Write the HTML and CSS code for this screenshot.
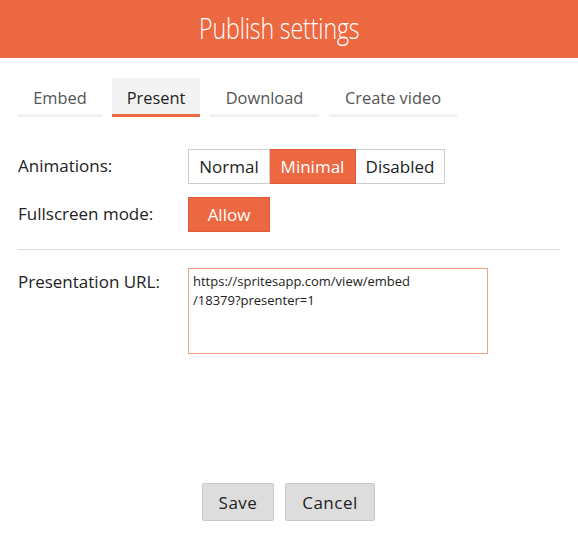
FILE: index.html
```html
<!DOCTYPE html>
<html>
<head>
<meta charset="utf-8">
<link rel="stylesheet" href="styles.css">
</head>
<body>
<div class="dialog">
  <header class="header"><h1 class="title">Publish settings</h1></header>
  <nav class="tabs">
    <div class="tab">Embed</div>
    <div class="tab active">Present</div>
    <div class="tab">Download</div>
    <div class="tab">Create video</div>
  </nav>
  <section class="options">
    <div class="row">
      <div class="label">Animations:</div>
      <div class="seg">
        <div class="seg-btn">Normal</div>
        <div class="seg-btn on">Minimal</div>
        <div class="seg-btn">Disabled</div>
      </div>
    </div>
    <div class="row">
      <div class="label">Fullscreen mode:</div>
      <div class="seg"><div class="seg-btn on allow">Allow</div></div>
    </div>
  </section>
  <hr class="divider">
  <section class="url-row">
    <div class="label">Presentation URL:</div>
    <div class="url-box">https://spritesapp.com/view/embed<br>/18379?presenter=1</div>
  </section>
  <footer class="footer">
    <button class="btn">Save</button>
    <button class="btn">Cancel</button>
  </footer>
</div>
</body>
</html>
```
FILE: styles.css
```css
* { box-sizing: border-box; }
html, body { margin: 0; padding: 0; background: #fff; }
body { font-family: "Open Sans", "Liberation Sans", sans-serif; color: #222; width: 578px; height: 544px; overflow: hidden; }
.dialog { display: flex; flex-direction: column; height: 544px; }
.header { background: #ec6841; height: 58px; display: flex; align-items: center; justify-content: center; padding-right: 20px; }
.title { margin: 0; color: #fff; font-weight: 300; font-size: 29px; transform: scaleX(0.8); letter-spacing: -0.2px; line-height: 1; margin-top: -4px; }
.tabs { display: flex; gap: 10px; padding: 20px 18px 0; }
.tab { height: 39px; padding-top: 9px; font-size: 16.4px; color: #555; text-align: center; border-bottom: 3px solid #f1f1f1; line-height: 22px; }
.tab:nth-child(1) { width: 84px; }
.tab:nth-child(2) { width: 88px; }
.tab:nth-child(3) { width: 109px; }
.tab:nth-child(4) { width: 128px; }
.tab.active { background: #f3f3f3; border-bottom-color: #ec6841; color: #222; }
.options { padding: 32px 18px 0; display: flex; flex-direction: column; gap: 13px; }
.row { display: flex; align-items: center; }
.label { width: 170px; font-size: 17px; color: #222; }
.row .label { margin-top: -2px; }
.seg { display: flex; }
.seg-btn { height: 35px; border: 1px solid #ccc; font-size: 17px; line-height: 33px; text-align: center; color: #222; background: #fff; }
.seg-btn:nth-child(1) { width: 82px; }
.seg-btn:nth-child(2) { width: 86px; border-left: 0; }
.seg-btn:nth-child(3) { width: 89px; border-left: 0; }
.seg-btn.on { background: #ec6841; border-color: #e05a33; color: #fff; }
.seg-btn.allow { width: 82px; }
.divider { margin: 17px 18px 0; border: 0; border-top: 1px solid #ddd; height: 0; }
.url-row { display: flex; padding: 18px 18px 0; align-items: flex-start; }
.url-row .label { margin-top: 2px; }
.url-box { width: 300px; height: 86px; border: 1px solid #f0a080; font-size: 13px; line-height: 19px; padding: 3px 4px; color: #222; }
.footer { margin-top: auto; margin-bottom: 23px; display: flex; justify-content: center; gap: 11px; padding-right: 1px; }
.btn { font-family: "Open Sans", "Liberation Sans", sans-serif; font-size: 17px; letter-spacing: 0.5px; color: #222; background: #ddd; border: 1px solid #c8c8c8; border-radius: 2px; height: 38px; padding: 0; }
.btn:nth-child(1) { width: 72px; }
.btn:nth-child(2) { width: 90px; }
```
